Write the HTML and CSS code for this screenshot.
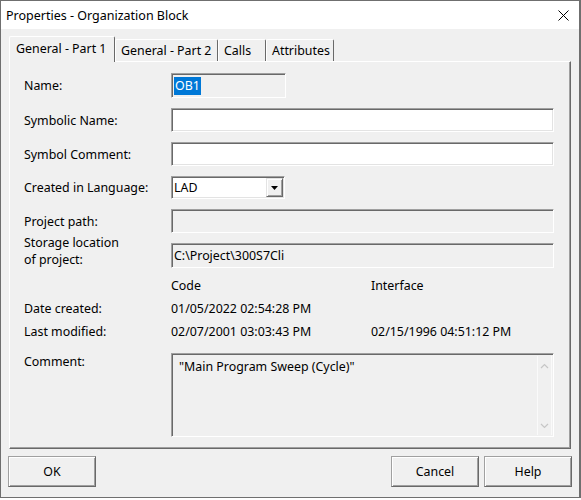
FILE: index.html
```html
<!DOCTYPE html>
<html>
<head>
<meta charset="utf-8">
<link rel="stylesheet" href="styles.css">
</head>
<body>
<div class="window">
  <div class="titlebar">
    <span class="title">Properties - Organization Block</span>
    <svg class="close" width="11" height="11" viewBox="0 0 11 11"><path d="M0.5 0.5 L10.5 10.5 M10.5 0.5 L0.5 10.5" stroke="#000" stroke-width="1" fill="none"/></svg>
  </div>
  <div class="body">
    <div class="tabs">
      <div class="tab active w-part1">General - Part 1</div>
      <div class="tab w-part2">General - Part 2</div>
      <div class="tab w-calls">Calls</div>
      <div class="tab w-attr">Attributes</div>
    </div>
    <div class="panel">
      <div class="row h25">
        <span class="label">Name:</span>
        <div class="field disabled short"><span class="sel">OB1</span></div>
      </div>
      <div class="row h24">
        <span class="label">Symbolic Name:</span>
        <div class="field grow"></div>
      </div>
      <div class="row h24">
        <span class="label">Symbol Comment:</span>
        <div class="field grow"></div>
      </div>
      <div class="row h23">
        <span class="label">Created in Language:</span>
        <div class="field combo short">
          <span class="combo-text">LAD</span>
          <span class="combo-btn"><svg width="7" height="4" viewBox="0 0 7 4"><path d="M0 0 H7 L3.5 4 Z" fill="#000"/></svg></span>
        </div>
      </div>
      <div class="row h24">
        <span class="label">Project path:</span>
        <div class="field disabled grow"></div>
      </div>
      <div class="row h25 bottom">
        <span class="label">Storage location<br>of project:</span>
        <div class="field disabled grow">C:\Project\300S7Cli</div>
      </div>
      <div class="dates">
        <span></span><span>Code</span><span>Interface</span>
        <span>Date created:</span><span>01/05/2022 02:54:28 PM</span><span></span>
        <span>Last modified:</span><span>02/07/2001 03:03:43 PM</span><span>02/15/1996 04:51:12 PM</span>
      </div>
      <div class="row top h84">
        <span class="label">Comment:</span>
        <div class="field disabled grow memo">
          <div class="memo-text">"Main Program Sweep (Cycle)"</div>
          <div class="scrollbar">
            <svg width="9" height="6" viewBox="0 0 9 6"><path d="M1 5 L4.5 1.5 L8 5" stroke="#c6c6c6" stroke-width="1.2" fill="none"/></svg>
            <svg width="9" height="6" viewBox="0 0 9 6"><path d="M1 1 L4.5 4.5 L8 1" stroke="#c6c6c6" stroke-width="1.2" fill="none"/></svg>
          </div>
        </div>
      </div>
    </div>
    <div class="buttons">
      <div class="btn">OK</div>
      <div class="spacer"></div>
      <div class="btn">Cancel</div>
      <div class="btn">Help</div>
    </div>
  </div>
</div>
</body>
</html>
```
FILE: styles.css
```css
html, body {
  margin: 0;
  background: #ffffff;
}
body {
  font-family: "Noto Sans", "Liberation Sans", sans-serif;
  font-size: 12.4px;
  color: #000;
}
.window {
  box-sizing: border-box;
  width: 581px;
  height: 498px;
  border: 1px solid #6f6f6f;
  border-right-width: 2px;
  background: #f0f0f0;
  display: flex;
  flex-direction: column;
}
.titlebar {
  flex: none;
  height: 28px;
  background: #fff;
  display: flex;
  align-items: center;
  justify-content: space-between;
  padding: 0 10px 0 5px;
}
.title {
  font-size: 12.5px;
}
.body {
  flex: 1;
  display: flex;
  flex-direction: column;
  padding: 7px 8px 0 8px;
}
.tabs {
  display: flex;
  align-items: flex-end;
  height: 25px;
}
.tab {
  box-sizing: border-box;
  height: 22px;
  padding: 2px 0 0 5px;
  border-top: 1px solid #fff;
  border-left: 1px solid #fff;
  border-right: 1px solid #696969;
  border-radius: 2px 2px 0 0;
  white-space: nowrap;
}
.tab.active {
  height: 26px;
  margin-bottom: -1px;
  padding: 3px 0 0 6px;
  background: #f0f0f0;
  position: relative;
  z-index: 1;
}
.w-part1 { width: 106px; }
.w-part2 { width: 103px; }
.w-calls { width: 48px; }
.w-attr { width: 68px; }
.panel {
  box-sizing: border-box;
  height: 388px;
  border: 1px solid;
  border-color: #fff #696969 #696969 #fff;
  box-shadow: inset -1px -1px #a0a0a0;
  padding: 11px 16px 0 14px;
  display: flex;
  flex-direction: column;
  gap: 10px;
}
.row {
  display: flex;
  align-items: center;
}
.row.bottom { align-items: flex-end; }
.row.top { align-items: flex-start; }
.h23 { height: 23px; }
.h24 { height: 24px; }
.h25 { height: 25px; }
.h84 { height: 84px; }
.label {
  flex: none;
  width: 147px;
  line-height: 17px;
}
.field {
  box-sizing: border-box;
  height: 100%;
  border: 1px solid;
  border-color: #a0a0a0 #fff #fff #a0a0a0;
  box-shadow: inset 1px 1px #696969, inset -1px -1px #e3e3e3;
  background: #fff;
  display: flex;
  align-items: center;
  padding: 0 2px;
}
.field.disabled {
  background: #f0f0f0;
  box-shadow: inset 1px 1px #696969;
}
.grow { flex: 1; }
.short { width: 115px; }
.sel {
  background: #0078d7;
  color: #fff;
  padding: 0 1px;
  line-height: 18px;
}
.combo {
  width: 114px;
  padding: 0 1px 0 2px;
}
.combo-text { flex: 1; }
.combo-btn {
  box-sizing: border-box;
  width: 17px;
  height: 19px;
  border: 1px solid;
  border-color: #e3e3e3 #696969 #696969 #e3e3e3;
  box-shadow: inset 1px 1px #fff, inset -1px -1px #a0a0a0;
  background: #f0f0f0;
  display: flex;
  align-items: center;
  justify-content: center;
}
.dates {
  display: grid;
  grid-template-columns: 147px 200px 1fr;
  grid-auto-rows: 23px;
  align-items: center;
  margin-top: -4px;
}
.memo {
  align-items: stretch;
  padding: 0;
}
.memo-text {
  flex: 1;
  padding: 4px 0 0 7px;
  line-height: 17px;
}
.scrollbar {
  box-sizing: border-box;
  width: 15px;
  margin: 2px 1px 1px 0;
  border-left: 1px solid #fafafa;
  border-right: 1px solid #fafafa;
  display: flex;
  flex-direction: column;
  justify-content: space-between;
  align-items: center;
  padding: 7px 0 6px;
}
.buttons {
  display: flex;
  gap: 5px;
  margin: 7px -1px 0 -1px;
}
.spacer { flex: 1; }
.btn {
  box-sizing: border-box;
  width: 88px;
  height: 31px;
  border: 1px solid;
  border-color: #a0a0a0 #696969 #696969 #a0a0a0;
  box-shadow: inset 1px 1px #fff, inset -1px -1px #a0a0a0;
  display: flex;
  align-items: center;
  justify-content: center;
}
```
